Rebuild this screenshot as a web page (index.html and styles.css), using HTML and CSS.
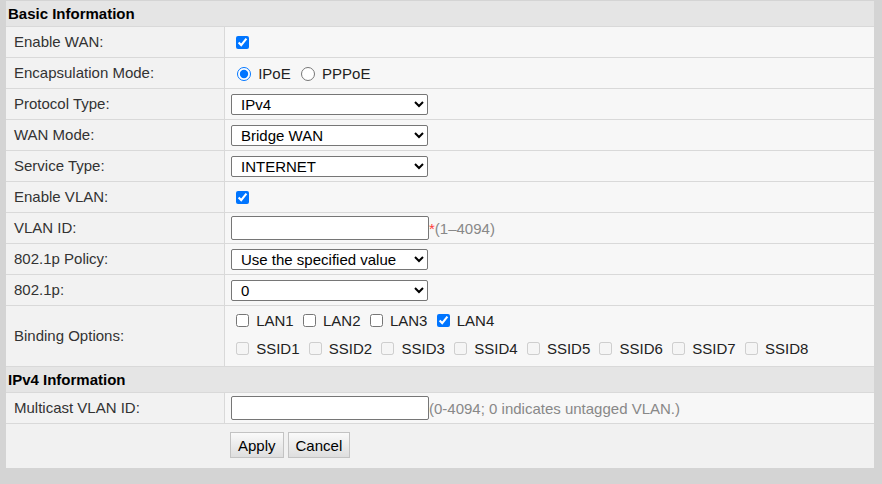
FILE: index.html
```html
<!DOCTYPE html>
<html>
<head>
<meta charset="utf-8">
<link rel="stylesheet" href="styles.css">
</head>
<body>
<div class="panel">
  <div class="section-head">Basic Information</div>
  <div class="row">
    <div class="label">Enable WAN:</div>
    <div class="value"><input type="checkbox" checked></div>
  </div>
  <div class="row">
    <div class="label">Encapsulation Mode:</div>
    <div class="value"><span class="line"><input type="radio" name="encap" checked> IPoE <input type="radio" name="encap"> PPPoE</span></div>
  </div>
  <div class="row">
    <div class="label">Protocol Type:</div>
    <div class="value"><select class="sel"><option>IPv4</option></select></div>
  </div>
  <div class="row">
    <div class="label">WAN Mode:</div>
    <div class="value"><select class="sel"><option>Bridge WAN</option></select></div>
  </div>
  <div class="row">
    <div class="label">Service Type:</div>
    <div class="value"><select class="sel"><option>INTERNET</option></select></div>
  </div>
  <div class="row">
    <div class="label">Enable VLAN:</div>
    <div class="value"><input type="checkbox" checked></div>
  </div>
  <div class="row">
    <div class="label">VLAN ID:</div>
    <div class="value"><span class="line"><input type="text" class="txt"><span class="req">*</span><span class="hint">(1–4094)</span></span></div>
  </div>
  <div class="row">
    <div class="label">802.1p Policy:</div>
    <div class="value"><select class="sel"><option>Use the specified value</option></select></div>
  </div>
  <div class="row">
    <div class="label">802.1p:</div>
    <div class="value"><select class="sel"><option>0</option></select></div>
  </div>
  <div class="row row-tall">
    <div class="label">Binding Options:</div>
    <div class="value value-stack">
      <div class="opt-line"><input type="checkbox"> LAN1 <input type="checkbox"> LAN2 <input type="checkbox"> LAN3 <input type="checkbox" checked> LAN4</div>
      <div class="opt-line"><input type="checkbox" disabled> SSID1 <input type="checkbox" disabled> SSID2 <input type="checkbox" disabled> SSID3 <input type="checkbox" disabled> SSID4 <input type="checkbox" disabled> SSID5 <input type="checkbox" disabled> SSID6 <input type="checkbox" disabled> SSID7 <input type="checkbox" disabled> SSID8</div>
    </div>
  </div>
  <div class="section-head">IPv4 Information</div>
  <div class="row">
    <div class="label">Multicast VLAN ID:</div>
    <div class="value"><span class="line"><input type="text" class="txt"><span class="hint">(0-4094; 0 indicates untagged VLAN.)</span></span></div>
  </div>
  <div class="actions">
    <button class="btn">Apply</button>
    <button class="btn">Cancel</button>
  </div>
</div>
</body>
</html>
```
FILE: styles.css
```css
html, body {
  margin: 0;
  padding: 0;
}
body {
  background: #d4d4d4;
  padding: 1px 8px 0 6px;
  font-family: "Liberation Sans", Arial, sans-serif;
  font-size: 15px;
  color: #333;
  height: 484px;
  box-sizing: border-box;
}
.panel {
  background: #f7f7f7;
}
.section-head {
  height: 26px;
  box-sizing: border-box;
  background: #e5e5e5;
  border-bottom: 1px solid #d9d9d9;
  padding-left: 2px;
  padding-bottom: 1px;
  font-weight: bold;
  color: #000;
  display: flex;
  align-items: center;
}
.row {
  display: grid;
  grid-template-columns: 219px 1fr;
  height: 31px;
  box-sizing: border-box;
  border-bottom: 1px solid #d9d9d9;
}
.row-tall {
  height: 61px;
}
.label {
  background: #f2f2f2;
  border-right: 1px solid #d9d9d9;
  padding-left: 8px;
  padding-bottom: 1px;
  display: flex;
  align-items: center;
  color: #333;
}
.value {
  background: #f7f7f7;
  padding-left: 6px;
  display: flex;
  align-items: center;
  color: #222;
}
.value-stack {
  flex-direction: column;
  align-items: flex-start;
  justify-content: flex-start;
}
.opt-line {
  height: 28px;
  display: flex;
  align-items: center;
  white-space: pre;
}
.line {
  display: flex;
  align-items: center;
  white-space: pre;
}
input[type="checkbox"] {
  width: 13px;
  height: 13px;
  margin: 3px 3px 3px 5px;
}
input[type="radio"] {
  width: 14px;
  height: 14px;
  margin: 2px 3px 0 6px;
}
.sel {
  width: 197px;
  height: 21px;
  font-family: "Liberation Sans", Arial, sans-serif;
  font-size: 15px;
  color: #000;
  background: #fff;
  border: 1px solid #767676;
  border-radius: 2px;
  padding: 0 0 0 5px;
  margin: 0;
}
.txt {
  width: 198px;
  height: 24px;
  box-sizing: border-box;
  border: 1px solid #767676;
  border-radius: 2px;
  background: #fff;
  margin: 0;
  padding: 1px 3px;
  font-family: "Liberation Sans", Arial, sans-serif;
  font-size: 15px;
}
.req {
  color: #ff3b3b;
}
.hint {
  color: #888;
}
.actions {
  background: #f1f1f1;
  height: 44px;
  box-sizing: border-box;
  padding: 8px 0 0 224px;
  display: flex;
  align-items: flex-start;
  gap: 4px;
}
.btn {
  height: 26px;
  padding: 0 7px;
  font-family: "Liberation Sans", Arial, sans-serif;
  font-size: 15px;
  color: #000;
  border: 1px solid #c3c3c3;
  border-radius: 0;
  background: linear-gradient(#fafafa, #dedede);
  margin: 0;
}
```
